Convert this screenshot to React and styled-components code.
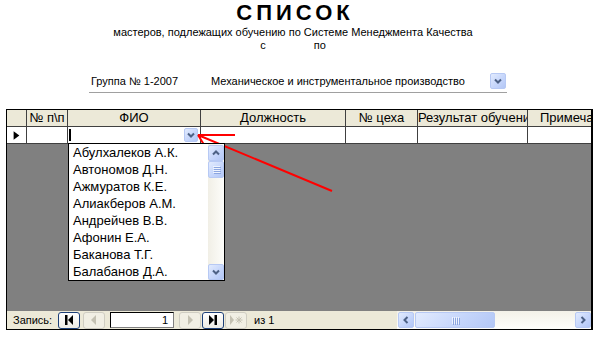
import React from "react";
import styled, { createGlobalStyle } from "styled-components";

const GlobalStyle = createGlobalStyle`
  html, body {
    margin: 0;
    padding: 0;
    background: #fff;
  }
  body {
    font-family: "Liberation Sans", Arial, sans-serif;
    color: #000;
  }
`;

const Page = styled.div`
  position: relative;
  width: 608px;
  height: 341px;
  overflow: hidden;
  display: flex;
  flex-direction: column;
`;

const Heading = styled.header`
  width: 586px;
  padding-top: 2px;
  text-align: center;
`;

const Title = styled.h1`
  margin: 0;
  padding-left: 4px;
  font-size: 22px;
  line-height: 22px;
  font-weight: bold;
  letter-spacing: 4px;
`;

const Subtitle = styled.div`
  margin-top: 2px;
  font-size: 11px;
  line-height: 13px;
`;

const Period = styled.div`
  display: flex;
  justify-content: center;
  gap: 48px;
  font-size: 11px;
  line-height: 13px;
`;

const GroupRow = styled.div`
  display: flex;
  align-items: center;
  margin: 21px 0 0 89px;
  width: 418px;
  height: 16px;
  padding-bottom: 3px;
  border-bottom: 1px solid #a0a0a0;
  font-size: 11px;
  line-height: 13px;
`;

const GroupLabel = styled.span`
  width: 120px;
  padding-left: 2px;
`;

const GroupValue = styled.span`
  flex: 1;
`;

const XpButton = styled.div`
  box-sizing: border-box;
  width: ${({ $w }) => $w || 16}px;
  height: ${({ $h }) => $h || 16}px;
  flex: none;
  display: flex;
  align-items: center;
  justify-content: center;
  border: 1px solid #b7c9f4;
  border-radius: 2px;
  background: linear-gradient(135deg, #e2ebfe 0%, #c6d6fb 55%, #b3c7f6 100%);
  margin: ${({ $m }) => $m || "0"};
`;

const DataSheet = styled.div`
  position: relative;
  margin: 16px 0 0 6px;
  width: 584px;
  border-top: 1px solid #000;
  border-left: 1px solid #000;
  border-right: 2px solid #000;
  border-bottom: 1px solid #000;
  overflow: hidden;
`;

const Row = styled.div`
  display: grid;
  grid-template-columns: 20px 41px 133px 145px 72px 110px 100px;
  height: 17px;
  box-sizing: border-box;
  border-bottom: 1px solid #404040;
  background: ${({ $head }) => ($head ? "#ece9d8" : "#fff")};
`;

const Cell = styled.div`
  position: relative;
  box-sizing: border-box;
  border-right: 1px solid #404040;
  font-size: 13px;
  line-height: 15px;
  text-align: center;
  white-space: nowrap;
  overflow: ${({ $open }) => ($open ? "visible" : "hidden")};
  display: ${({ $flex }) => ($flex ? "flex" : "block")};
  align-items: center;
`;

const Caret = styled.span`
  width: 2px;
  height: 12px;
  margin-left: 1px;
  background: #000;
`;

const DropList = styled.div`
  position: absolute;
  left: 0;
  top: 16px;
  width: 157px;
  box-sizing: border-box;
  display: flex;
  border: 1px solid #000;
  background: #fff;
  z-index: 2;
`;

const Items = styled.div`
  flex: 1;
`;

const Item = styled.div`
  height: 17px;
  line-height: 17px;
  padding-left: 4px;
  font-size: 13px;
  text-align: left;
`;

const VScroll = styled.div`
  width: 16px;
  display: flex;
  flex-direction: column;
  background: linear-gradient(to right, #f1efe6, #fdfdfa);
`;

const Spacer = styled.div`
  flex: 1;
`;

const Grip = styled.div`
  display: flex;
  flex-direction: ${({ $vertical }) => ($vertical ? "column" : "row")};
  gap: 1px;

  & > i {
    display: block;
    width: ${({ $vertical }) => ($vertical ? "7px" : "1px")};
    height: ${({ $vertical }) => ($vertical ? "1px" : "7px")};
    background: #eef3fe;
    box-shadow: 1px 1px 0 #8ca6e0;
  }
`;

const GrayArea = styled.div`
  height: 167px;
  background: #808080;
`;

const NavBar = styled.div`
  height: 18px;
  display: flex;
  align-items: center;
  background: #ece9d8;
  font-size: 11px;
`;

const NavLabel = styled.span`
  width: 45px;
  padding-left: 6px;
`;

const NavButton = styled.div`
  box-sizing: border-box;
  width: 22px;
  height: 17px;
  display: flex;
  align-items: center;
  justify-content: center;
  margin-right: ${({ $gap }) => $gap || 0}px;
  border: 1px solid ${({ $off }) => ($off ? "#cfcdc2" : "#1c3f78")};
  border-radius: 3px;
  background: ${({ $off }) =>
    $off ? "#f1efe4" : "linear-gradient(#ffffff, #ebeae4)"};
`;

const RecordBox = styled.div`
  box-sizing: border-box;
  width: 64px;
  height: 16px;
  margin-right: 5px;
  padding-right: 5px;
  text-align: right;
  line-height: 14px;
  background: #fff;
  border: 1px solid #808080;
  border-top-color: #000;
  border-left-color: #000;
`;

const Total = styled.span`
  margin-left: 7px;
`;

const HScroll = styled.div`
  margin-left: auto;
  width: 194px;
  height: 18px;
  display: flex;
  align-items: center;
  background: linear-gradient(#f3f1e8, #fefefb);
`;

const Track = styled.div`
  flex: 1;
`;

const Overlay = styled.svg`
  position: absolute;
  left: 0;
  top: 0;
  pointer-events: none;
`;

const chevrons = {
  down: "M1 1.5 L4 4.5 L7 1.5",
  up: "M1 4.5 L4 1.5 L7 4.5",
  left: "M4.5 1 L1.5 4 L4.5 7",
  right: "M1.5 1 L4.5 4 L1.5 7",
};

const Chevron = ({ dir = "down" }) => {
  const vertical = dir === "up" || dir === "down";
  return (
    <svg
      width={vertical ? 8 : 6}
      height={vertical ? 6 : 8}
      viewBox={vertical ? "0 0 8 6" : "0 0 6 8"}
    >
      <path d={chevrons[dir]} fill="none" stroke="#4d6185" strokeWidth="2" />
    </svg>
  );
};

const NavIcon = ({ kind, off }) => {
  const c = off ? "#c4c1b2" : "#000";
  return (
    <svg width="14" height="10" viewBox="0 0 14 10">
      {kind === "first" && (
        <>
          <rect x="3" y="0" width="2.5" height="10" fill={c} />
          <polygon points="11,0 6,5 11,10" fill={c} />
        </>
      )}
      {kind === "prev" && <polygon points="9,0 4,5 9,10" fill={c} />}
      {kind === "next" && <polygon points="5,0 10,5 5,10" fill={c} />}
      {kind === "last" && (
        <>
          <polygon points="3,0 8,5 3,10" fill={c} />
          <rect x="8.5" y="0" width="2.5" height="10" fill={c} />
        </>
      )}
      {kind === "new" && (
        <>
          <polygon points="1,0 5,5 1,10" fill={c} />
          <path
            d="M10 1.5 V8.5 M6.5 5 H13.5 M7.5 2.5 L12.5 7.5 M12.5 2.5 L7.5 7.5"
            stroke={c}
            strokeWidth="1"
          />
        </>
      )}
    </svg>
  );
};

const columns = [
  "",
  "№ п\\п",
  "ФИО",
  "Должность",
  "№ цеха",
  "Результат обучения",
  "Примечание",
];

const names = [
  "Абулхалеков А.К.",
  "Автономов Д.Н.",
  "Ажмуратов К.Е.",
  "Алиакберов А.М.",
  "Андрейчев В.В.",
  "Афонин Е.А.",
  "Баканова Т.Г.",
  "Балабанов Д.А.",
];

export default function App() {
  return (
    <Page>
      <GlobalStyle />
      <Heading>
        <Title>СПИСОК</Title>
        <Subtitle>
          мастеров, подлежащих обучению по Системе Менеджмента Качества
        </Subtitle>
        <Period>
          <span>с</span>
          <span>по</span>
        </Period>
      </Heading>

      <GroupRow>
        <GroupLabel>Группа № 1-2007</GroupLabel>
        <GroupValue>Механическое и инструментальное производство</GroupValue>
        <XpButton $m="0 1px 0 0">
          <Chevron dir="down" />
        </XpButton>
      </GroupRow>

      <DataSheet>
        <Row $head>
          {columns.map((c, i) => (
            <Cell key={i}>{c}</Cell>
          ))}
        </Row>
        <Row>
          <Cell $flex>
            <svg width="20" height="9" viewBox="0 0 20 9">
              <polygon points="7,0 13,4.5 7,9" fill="#000" />
            </svg>
          </Cell>
          <Cell />
          <Cell $flex $open>
            <Caret />
            <XpButton $w={14} $h={14} $m="0 2px 0 auto">
              <Chevron dir="down" />
            </XpButton>
            <DropList>
              <Items>
                {names.map((n) => (
                  <Item key={n}>{n}</Item>
                ))}
              </Items>
              <VScroll>
                <XpButton $m="1px 0 0 0">
                  <Chevron dir="up" />
                </XpButton>
                <XpButton $h={17}>
                  <Grip $vertical>
                    <i />
                    <i />
                    <i />
                    <i />
                  </Grip>
                </XpButton>
                <Spacer />
                <XpButton>
                  <Chevron dir="down" />
                </XpButton>
              </VScroll>
            </DropList>
          </Cell>
          <Cell />
          <Cell />
          <Cell />
          <Cell />
        </Row>
        <GrayArea />
        <NavBar>
          <NavLabel>Запись:</NavLabel>
          <NavButton $gap={3}>
            <NavIcon kind="first" />
          </NavButton>
          <NavButton $off $gap={5}>
            <NavIcon kind="prev" off />
          </NavButton>
          <RecordBox>1</RecordBox>
          <NavButton $off $gap={1}>
            <NavIcon kind="next" off />
          </NavButton>
          <NavButton $gap={1}>
            <NavIcon kind="last" />
          </NavButton>
          <NavButton $off>
            <NavIcon kind="new" off />
          </NavButton>
          <Total>из 1</Total>
          <HScroll>
            <XpButton $m="0 1px 0 1px">
              <Chevron dir="left" />
            </XpButton>
            <XpButton $w={80}>
              <Grip>
                <i />
                <i />
                <i />
                <i />
              </Grip>
            </XpButton>
            <Track />
            <XpButton>
              <Chevron dir="right" />
            </XpButton>
          </HScroll>
        </NavBar>
      </DataSheet>

      <Overlay width="608" height="341" viewBox="0 0 608 341">
        <path
          d="M332 191 L198 135 L235 135 M198 135 L211 156"
          fill="none"
          stroke="#ff0000"
          strokeWidth="2"
        />
      </Overlay>
    </Page>
  );
}
